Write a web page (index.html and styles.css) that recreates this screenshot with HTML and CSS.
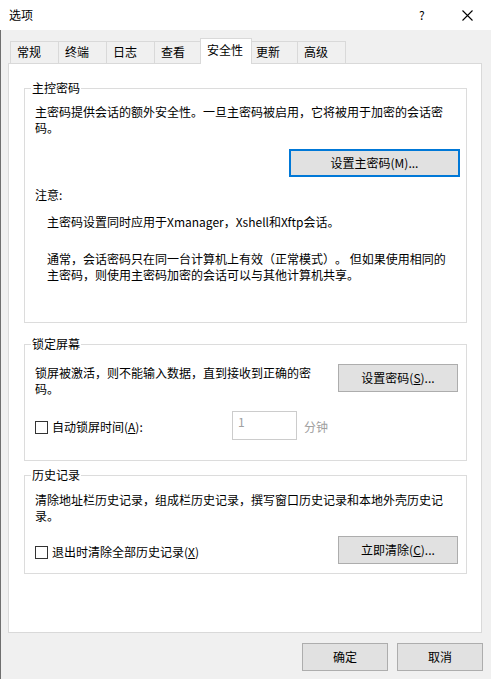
FILE: index.html
```html
<!DOCTYPE html>
<html lang="zh-CN">
<head>
<meta charset="utf-8">
<title>选项</title>
<link rel="stylesheet" href="styles.css">
</head>
<body>
<div class="titlebar">
  <span class="title">选项</span>
  <span class="help">?</span>
  <svg class="close" width="11" height="11" viewBox="0 0 11 11"><path d="M0.5 0.5 L10.5 10.5 M10.5 0.5 L0.5 10.5" stroke="#000" stroke-width="1.1" fill="none"/></svg>
</div>
<div class="main">
  <div class="tabs">
    <div class="tab">常规</div>
    <div class="tab">终端</div>
    <div class="tab">日志</div>
    <div class="tab">查看</div>
    <div class="tab active">安全性</div>
    <div class="tab">更新</div>
    <div class="tab">高级</div>
  </div>
  <div class="panel">
    <fieldset class="group g-master">
      <legend>主控密码</legend>
      <p class="desc">主密码提供会话的额外安全性。一旦主密码被启用，它将被用于加密的会话密码。</p>
      <div class="btn-row"><button class="btn primary">设置主密码(M)...</button></div>
      <p class="note">注意:</p>
      <p class="indent first">主密码设置同时应用于Xmanager，Xshell和Xftp会话。</p>
      <p class="indent second">通常，会话密码只在同一台计算机上有效（正常模式）。 但如果使用相同的主密码，则使用主密码加密的会话可以与其他计算机共享。</p>
    </fieldset>
    <fieldset class="group g-lock">
      <legend>锁定屏幕</legend>
      <div class="lock-row">
        <p class="desc">锁屏被激活，则不能输入数据，直到接收到正确的密码。</p>
        <button class="btn side">设置密码(<u>S</u>)...</button>
      </div>
      <div class="opt-row">
        <label class="check"><span class="box"></span>自动锁屏时间(<u>A</u>):</label>
        <div class="num">1</div>
        <span class="unit">分钟</span>
      </div>
    </fieldset>
    <fieldset class="group g-hist">
      <legend>历史记录</legend>
      <p class="desc">清除地址栏历史记录，组成栏历史记录，撰写窗口历史记录和本地外壳历史记录。</p>
      <div class="hist-row">
        <label class="check"><span class="box"></span>退出时清除全部历史记录(<u>X</u>)</label>
        <button class="btn side">立即清除(<u>C</u>)...</button>
      </div>
    </fieldset>
  </div>
  <div class="footer">
    <button class="btn foot">确定</button>
    <button class="btn foot">取消</button>
  </div>
</div>
</body>
</html>
```

FILE: styles.css
```css
* { box-sizing: border-box; }

body {
  margin: 0;
  width: 491px;
  height: 679px;
  overflow: hidden;
  background: #f0f0f0;
  color: #000;
  font-family: "Noto Sans CJK SC", "Noto Sans", sans-serif;
  font-size: 12px;
  line-height: 16px;
  text-spacing-trim: space-all;
}

.titlebar {
  height: 30px;
  background: #fff;
  display: flex;
  align-items: center;
  padding: 0 18px 0 9px;
}
.title { flex: 1; line-height: 30px; }
.help { width: 7px; margin-right: 36px; line-height: 16px; }
.close { display: block; }

.main {
  height: 649px;
  border-left: 1px solid #6f6f6f;
}

.tabs {
  display: flex;
  align-items: flex-end;
  height: 33px;
  padding-left: 9px;
}
.tab {
  width: 49px;
  height: 22px;
  margin-right: -1px;
  border: 1px solid #d9d9d9;
  border-bottom: 0;
  padding-left: 6px;
  line-height: 20px;
  background: #f0f0f0;
  white-space: nowrap;
}
.tab.active {
  width: 52px;
  height: 26px;
  margin-left: -2px;
  margin-right: -3px;
  margin-bottom: -1px;
  padding-top: 1px;
  background: #fff;
  position: relative;
  z-index: 1;
}

.panel {
  width: 474px;
  height: 570px;
  margin-left: 7px;
  background: #fff;
  border: 1px solid #d9d9d9;
  padding: 16px 14px 0 15px;
}

.group {
  margin: 0;
  min-width: 0;
  border: 1px solid #dcdcdc;
  padding: 8px 8px 39px 10px;
}
.group legend {
  padding: 0 1px;
  margin-left: -4px;
  line-height: 16px;
}
.g-lock { margin-top: 13px; padding-top: 13px; padding-bottom: 20px; }
.g-hist { margin-top: 6px; padding-top: 9px; padding-bottom: 9px; }

p { margin: 0; }
.desc { padding-right: 4px; }

.btn {
  height: 28px;
  padding: 0;
  border: 1px solid #adadad;
  background: #e1e1e1;
  color: #000;
  font: inherit;
  line-height: 16px;
}
.btn.primary { width: 171px; border: 2px solid #0078d7; }
.btn.side { width: 120px; flex: none; }

.btn-row {
  display: flex;
  justify-content: flex-end;
  margin-top: 13px;
  margin-right: -2px;
}
.note { margin-top: 10px; }
.indent { padding-left: 12px; padding-right: 4px; }
.indent.first { margin-top: 11px; }
.indent.second { margin-top: 21px; }

.lock-row { display: flex; align-items: flex-start; }
.lock-row .desc { flex: 1; }
.lock-row .btn { margin-left: 16px; margin-top: -1px; }

.opt-row {
  display: flex;
  align-items: center;
  height: 29px;
  margin-top: 14px;
}
.check {
  display: flex;
  align-items: center;
  white-space: nowrap;
}
.opt-row .check { width: 197px; padding-top: 3px; }
.box {
  width: 13px;
  height: 13px;
  border: 1px solid #333;
  background: #fff;
  margin-right: 4px;
  flex: none;
}
.num {
  align-self: flex-start;
  width: 65px;
  height: 29px;
  border: 1px solid #cccccc;
  background: #fff;
  padding: 2px 5px;
  color: #a0a0a0;
}
.unit { margin-left: 7px; padding-top: 3px; color: #a0a0a0; }

.hist-row {
  display: flex;
  align-items: center;
  margin-top: 12px;
}
.hist-row .check { padding-top: 4px; }
.hist-row .btn { margin-left: auto; }

.footer {
  display: flex;
  justify-content: flex-end;
  gap: 9px;
  margin-top: 10px;
  padding-right: 8px;
}
.btn.foot { width: 86px; }
```
